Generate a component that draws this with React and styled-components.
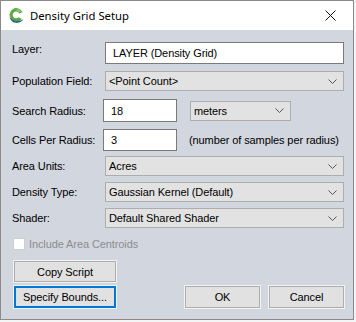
import styled, { createGlobalStyle } from 'styled-components';

const GlobalStyle = createGlobalStyle`
    html, body {
        margin: 0;
        padding: 0;
        background: #f4f4f4;
    }
    body {
        font-family: 'Liberation Sans', Arial, sans-serif;
        font-size: 11px;
        letter-spacing: -0.1px;
        color: #000;
    }
`;

const AppIcon = () => (
    <svg width="17" height="17" viewBox="0 0 17 17">
        <path d="M14.6 5.2 A6.8 6.8 0 1 0 13.8 12 L10.6 10.2 A3.4 3.4 0 1 1 11.2 6.4 Z" fill="#5fa845" />
        <path d="M8.6 2.2 A5.6 5.6 0 0 1 13.4 4.6 L11.6 5.6 A3.6 3.6 0 0 0 8.6 4.4 Z" fill="#8cc66e" />
        <path d="M1.4 10.2 Q4 16.2 9 15.8 Q13.2 15.4 15.4 12.2 Q11.4 14.8 7.2 13.8 Q3.6 13 1.4 10.2 Z" fill="#1c4a68" />
        <path d="M3 12.6 Q6 14.6 9.6 14.4 Q12.4 14.2 14.4 12.8 Q11.6 15.4 8 15.2 Q5 15 3 12.6 Z" fill="#2d86a3" />
    </svg>
);

const CloseIcon = () => (
    <svg width="11" height="11" viewBox="0 0 11 11">
        <path d="M0.5 0.5 L10.5 10.5 M10.5 0.5 L0.5 10.5" stroke="#111" strokeWidth="1" fill="none" />
    </svg>
);

const Chevron = () => (
    <svg width="9" height="5" viewBox="0 0 9 5">
        <path d="M0.5 0.5 L4.5 4.5 L8.5 0.5" stroke="#555" strokeWidth="1" fill="none" />
    </svg>
);

const Field = ({ label, children, top }) => (
    <Row $h={top ? 22 : undefined} $top={top}>
        <Label>{label}</Label>
        {children}
    </Row>
);

const Select = ({ value, width }) => (
    <SelectBox $w={width}>
        <span>{value}</span>
        <Chevron />
    </SelectBox>
);

const App = () => {
    return (
        <>
            <GlobalStyle />
            <Window>
                <TitleBar>
                    <AppIcon />
                    <Title>Density Grid Setup</Title>
                    <CloseBtn>
                        <CloseIcon />
                    </CloseBtn>
                </TitleBar>
                <Body>
                    <Field label="Layer:" top>
                        <TextBox $grow>LAYER (Density Grid)</TextBox>
                    </Field>
                    <Gap $h={7} />
                    <Field label="Population Field:">
                        <Select value="<Point Count>" />
                    </Field>
                    <Gap $h={8} />
                    <Field label="Search Radius:">
                        <TextBox $w={74} $h={23} $shift>18</TextBox>
                        <Select value="meters" width={101} />
                    </Field>
                    <Gap $h={7} />
                    <Field label="Cells Per Radius:">
                        <TextBox $w={74} $shift>3</TextBox>
                        <Hint>(number of samples per radius)</Hint>
                    </Field>
                    <Gap $h={5} />
                    <Field label="Area Units:">
                        <Select value="Acres" />
                    </Field>
                    <Gap $h={6} />
                    <Field label="Density Type:">
                        <Select value="Gaussian Kernel (Default)" />
                    </Field>
                    <Gap $h={6} />
                    <Field label="Shader:">
                        <Select value="Default Shared Shader" />
                    </Field>
                    <Gap $h={10} />
                    <CheckRow>
                        <CheckBox />
                        <span>Include Area Centroids</span>
                    </CheckRow>
                    <Gap $h={11} />
                    <Button $w={102} $h={21}>Copy Script</Button>
                    <Gap $h={4} />
                    <ButtonBar>
                        <Button $w={102} $focused>Specify Bounds...</Button>
                        <RightButtons>
                            <Button $w={75}>OK</Button>
                            <Button $w={75}>Cancel</Button>
                        </RightButtons>
                    </ButtonBar>
                </Body>
            </Window>
        </>
    );
};

export default App;

const Window = styled.div`
    width: 354px;
    height: 320px;
    box-sizing: border-box;
    border: 1px solid #8a8a8a;
    background: #d2d6df;
    display: flex;
    flex-direction: column;
`;

const TitleBar = styled.div`
    height: 29px;
    background: #fff;
    display: flex;
    align-items: center;
    padding-left: 7px;
    svg {
        flex: none;
    }
`;

const Title = styled.div`
    font-family: 'Noto Sans', 'Open Sans', sans-serif;
    font-size: 11.3px;
    letter-spacing: 0;
    margin-left: 5px;
    flex: 1;
`;

const CloseBtn = styled.div`
    width: 46px;
    height: 29px;
    display: flex;
    align-items: center;
    justify-content: center;
`;

const Body = styled.div`
    flex: 1;
    display: flex;
    flex-direction: column;
    padding: 12px 9px 0 11px;
`;

const Row = styled.div`
    display: flex;
    align-items: ${(p) => (p.$top ? 'flex-start' : 'center')};
    height: ${(p) => (p.$h ? `${p.$h}px` : 'auto')};
`;

const Gap = styled.div`
    height: ${(p) => p.$h}px;
    flex: none;
`;

const Label = styled.div`
    width: 93px;
    flex: none;
    line-height: 14px;
`;

const TextBox = styled.div`
    box-sizing: border-box;
    height: ${(p) => p.$h || 22}px;
    width: ${(p) => (p.$w ? `${p.$w}px` : 'auto')};
    flex: ${(p) => (p.$grow ? 1 : 'none')};
    margin-left: ${(p) => (p.$shift ? '-2px' : '0')};
    background: #fff;
    border: 1px solid #7a7a7a;
    display: flex;
    align-items: center;
    padding-left: 7px;
`;

const SelectBox = styled.div`
    box-sizing: border-box;
    height: 20px;
    width: ${(p) => (p.$w ? `${p.$w}px` : 'auto')};
    flex: ${(p) => (p.$w ? 'none' : 1)};
    margin-left: ${(p) => (p.$w ? '13px' : '0')};
    background: #e2e2e2;
    border: 1px solid #adadad;
    display: flex;
    align-items: center;
    justify-content: space-between;
    padding: 0 6px 0 3px;
`;

const Hint = styled.div`
    margin-left: 12px;
`;

const CheckRow = styled.div`
    display: flex;
    align-items: center;
    height: 12px;
    padding-left: 1px;
    color: #8d8d8d;
`;

const CheckBox = styled.div`
    width: 12px;
    height: 12px;
    box-sizing: border-box;
    background: #fff;
    border: 1px solid #cfcfcf;
    margin-right: 4px;
`;

const ButtonBar = styled.div`
    display: flex;
    justify-content: space-between;
    align-items: flex-start;
`;

const RightButtons = styled.div`
    display: flex;
    gap: 7px;
`;

const Button = styled.div`
    box-sizing: border-box;
    width: ${(p) => p.$w}px;
    height: ${(p) => p.$h || 22}px;
    margin-left: 2px;
    background: #e1e1e1;
    border: ${(p) => (p.$focused ? '2px solid #0078d7' : '1px solid #adadad')};
    box-shadow: 0 0 0 1px #f3f3f3;
    display: flex;
    align-items: center;
    justify-content: center;
`;
